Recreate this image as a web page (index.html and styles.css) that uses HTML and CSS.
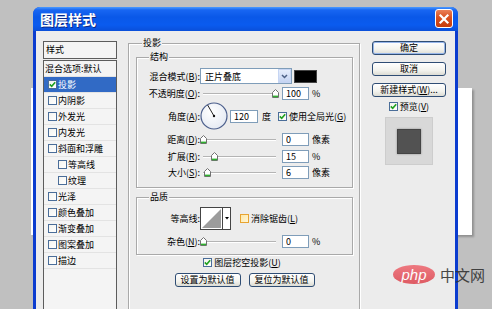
FILE: index.html
```html
<!DOCTYPE html>
<html>
<head>
    <meta charset="utf-8">
    <title>图层样式</title>
    <link rel="stylesheet" href="styles.css">
</head>
<body>
    <div class="canvasBehind"></div>

    <div class="dialog">
        <div class="titleBar">
            <span class="titleText">图层样式</span>
            <span class="closeBtn">
                <svg width="16" height="16" viewBox="0 0 16 16"><path d="M4.5 4.5 L11.5 11.5 M11.5 4.5 L4.5 11.5" stroke="#fff" stroke-width="2.2" stroke-linecap="square"/></svg>
            </span>
        </div>

        <div class="dialogBody">
            <div class="styleList">
                <div class="listHead">样式</div>
                <ul class="listItems">
                    <li class="item plain">混合选项:默认</li>
                    <li class="item selected"><span class="check on"><svg width="7" height="7" viewBox="0 0 7 7"><path d="M0.8 3.4 L2.7 5.3 L6.2 1.2" fill="none" stroke="#21a121" stroke-width="1.6"/></svg></span>投影</li>
                    <li class="item"><span class="check"></span>内阴影</li>
                    <li class="item"><span class="check"></span>外发光</li>
                    <li class="item"><span class="check"></span>内发光</li>
                    <li class="item"><span class="check"></span>斜面和浮雕</li>
                    <li class="item sub"><span class="check"></span>等高线</li>
                    <li class="item sub"><span class="check"></span>纹理</li>
                    <li class="item"><span class="check"></span>光泽</li>
                    <li class="item"><span class="check"></span>颜色叠加</li>
                    <li class="item"><span class="check"></span>渐变叠加</li>
                    <li class="item"><span class="check"></span>图案叠加</li>
                    <li class="item"><span class="check"></span>描边</li>
                </ul>
            </div>

            <div class="group mainGroup">
                <span class="legend">投影</span>

                <div class="group structGroup">
                    <span class="legend">结构</span>

                    <div class="row rowSelect">
                        <span class="label">混合模式(<u>B</u>):</span>
                        <div class="selectBox">
                            <span class="selectText">正片叠底</span>
                            <span class="selectArrow"><svg width="11" height="12" viewBox="0 0 11 12"><path d="M3 5 L5.5 7.5 L8 5" fill="none" stroke="#4d6185" stroke-width="1.5"/></svg></span>
                        </div>
                        <span class="swatch"></span>
                    </div>

                    <div class="row rowOpacity">
                        <span class="label">不透明度(<u>O</u>):</span>
                        <div class="slider"><span class="thumb" style="left: 72px"></span></div>
                        <input class="num" type="text" value="100">
                        <span class="unit">%</span>
                    </div>

                    <div class="row rowAngle">
                        <span class="label">角度(<u>A</u>):</span>
                        <svg class="dial" width="28" height="28" viewBox="0 0 28 28">
                            <defs>
                                <radialGradient id="dialFill" cx="0.4" cy="0.35" r="0.7">
                                    <stop offset="0" stop-color="#ffffff"/>
                                    <stop offset="1" stop-color="#e4e9f2"/>
                                </radialGradient>
                            </defs>
                            <circle cx="14" cy="14" r="13" fill="url(#dialFill)" stroke="#4c5f8c" stroke-width="1.2"/>
                            <line x1="14" y1="14" x2="7.6" y2="3" stroke="#222" stroke-width="1"/>
                            <circle cx="14" cy="14" r="1.2" fill="#111"/>
                        </svg>
                        <input class="num angleNum" type="text" value="120">
                        <span class="unit degUnit">度</span>
                        <span class="check on globalCheck"><svg width="7" height="7" viewBox="0 0 7 7"><path d="M0.8 3.4 L2.7 5.3 L6.2 1.2" fill="none" stroke="#21a121" stroke-width="1.6"/></svg></span>
                        <span class="checkText">使用全局光(<u>G</u>)</span>
                    </div>

                    <div class="row rowDist">
                        <span class="label">距离(<u>D</u>):</span>
                        <div class="slider"><span class="thumb" style="left: 0px"></span></div>
                        <input class="num" type="text" value="0">
                        <span class="unit">像素</span>
                    </div>

                    <div class="row rowSpread">
                        <span class="label">扩展(<u>R</u>):</span>
                        <div class="slider"><span class="thumb" style="left: 11px"></span></div>
                        <input class="num" type="text" value="15">
                        <span class="unit">%</span>
                    </div>

                    <div class="row rowSize">
                        <span class="label">大小(<u>S</u>):</span>
                        <div class="slider"><span class="thumb" style="left: 4px"></span></div>
                        <input class="num" type="text" value="6">
                        <span class="unit">像素</span>
                    </div>
                </div>

                <div class="group qualityGroup">
                    <span class="legend">品质</span>

                    <div class="row rowContour">
                        <span class="label">等高线:</span>
                        <svg class="contour" width="31" height="23" viewBox="0 0 31 23">
                            <rect x="0.5" y="0.5" width="30" height="22" fill="#fff" stroke="#444"/>
                            <polygon points="2,21 21,2 21,21" fill="#9c9c9c"/>
                            <line x1="22.5" y1="1" x2="22.5" y2="22" stroke="#444"/>
                            <polygon points="25,10 29,10 27,12.5" fill="#000"/>
                        </svg>
                        <span class="check hover antiCheck"></span>
                        <span class="checkText">消除锯齿(<u>L</u>)</span>
                    </div>

                    <div class="row rowNoise">
                        <span class="label">杂色(<u>N</u>):</span>
                        <div class="slider"><span class="thumb" style="left: 0px"></span></div>
                        <input class="num" type="text" value="0">
                        <span class="unit">%</span>
                    </div>
                </div>

                <div class="knockRow">
                    <span class="check on"><svg width="7" height="7" viewBox="0 0 7 7"><path d="M0.8 3.4 L2.7 5.3 L6.2 1.2" fill="none" stroke="#21a121" stroke-width="1.6"/></svg></span>
                    <span class="checkText">图层挖空投影(<u>U</u>)</span>
                </div>

                <div class="defaultBtns">
                    <button class="btn wideBtn">设置为默认值</button>
                    <button class="btn wideBtn">复位为默认值</button>
                </div>
            </div>

            <div class="sideCol">
                <button class="btn okBtn">确定</button>
                <button class="btn">取消</button>
                <button class="btn">新建样式(<u>W</u>)...</button>
                <div class="previewRow">
                    <span class="check on"><svg width="7" height="7" viewBox="0 0 7 7"><path d="M0.8 3.4 L2.7 5.3 L6.2 1.2" fill="none" stroke="#21a121" stroke-width="1.6"/></svg></span>
                    <span class="checkText">预览(<u>V</u>)</span>
                </div>
                <div class="previewBox">
                    <span class="previewSquare"></span>
                </div>
            </div>
        </div>
    </div>

    <div class="watermark">
        <span class="phpBadge">php</span>
        <span class="cnText">中文网</span>
    </div>
</body>
</html>
```

FILE: styles.css
```css
body {
    margin: 0;
    width: 492px;
    height: 309px;
    overflow: hidden;
    position: relative;
    background-color: #c0c0c0;
    font-family: "Noto Sans CJK SC", sans-serif;
    font-size: 9px;
    color: #000;
}

u {
    text-decoration: underline;
}

.canvasBehind {
    position: absolute;
    left: 31px;
    top: 88px;
    width: 441px;
    height: 147px;
    background-color: #ffffff;
    box-shadow: 2px 2px 2px rgba(0, 0, 0, 0.25);
}

.dialog {
    position: absolute;
    left: 33px;
    top: 7px;
    width: 425px;
    height: 302px;
    display: flex;
    flex-direction: column;
    background-color: #0b3ccf;
    border-radius: 7px 7px 0 0;
}

.titleBar {
    height: 24px;
    flex: none;
    display: flex;
    align-items: flex-start;
    justify-content: space-between;
    padding: 0 5px 0 7px;
    border-radius: 7px 7px 0 0;
    background: linear-gradient(#4c9bff 0, #1866f2 3px, #0a58e8 10px, #0a5bef 18px, #0a4fd9 24px);
}

.titleText {
    margin-top: 5px;
    color: #fff;
    font-size: 14px;
    font-weight: bold;
    line-height: 14px;
    text-shadow: 1px 1px 0 #0b2a86;
}

.closeBtn {
    margin-top: 2px;
    width: 16px;
    height: 17px;
    display: flex;
    align-items: center;
    justify-content: center;
    border: 1px solid #fff;
    border-radius: 3px;
    background: linear-gradient(#ea8058, #d9501f 45%, #c63c0c);
}

.dialogBody {
    flex: 1;
    min-height: 0;
    overflow: hidden;
    margin: 0 3px;
    display: flex;
    align-items: flex-start;
    padding: 10px 9px 0 7px;
    background-color: #ececec;
}

/* left list of styles */
.styleList {
    width: 74px;
    flex: none;
}

.listHead {
    height: 18px;
    box-sizing: border-box;
    margin-bottom: 1px;
    padding-left: 2px;
    line-height: 16px;
    border: 1px solid #5c5c5c;
    background-color: #f4f4f4;
}

.listItems {
    list-style: none;
    margin: 0;
    padding: 0;
    height: 248px;
    border: 1px solid #5c5c5c;
    border-bottom: none;
    background-color: #f4f4f4;
}

.item {
    height: 16px;
    box-sizing: border-box;
    display: flex;
    align-items: center;
    padding-left: 4px;
    border-bottom: 1px solid #e3e3e3;
    white-space: nowrap;
}

.item.plain {
    padding-left: 1px;
}

.item.sub {
    padding-left: 14px;
}

.item.selected {
    background-color: #316ac5;
    color: #fff;
}

.check {
    width: 9px;
    height: 9px;
    box-sizing: border-box;
    flex: none;
    display: inline-flex;
    align-items: center;
    justify-content: center;
    border: 1px solid #4a6d99;
    background: linear-gradient(135deg, #f4f4f0, #ffffff);
}

.item .check {
    margin-right: 1px;
}

.check.hover {
    border-color: #e8a431;
    background: linear-gradient(135deg, #fde8a8, #fff6d8);
}

.checkText {
    margin-left: 2px;
    white-space: nowrap;
}

/* group boxes */
.group {
    position: relative;
    box-sizing: border-box;
    border: 1px solid #a9a9a9;
    box-shadow: inset 1px 1px 0 #fff, 1px 1px 0 #fff;
}

.legend {
    position: absolute;
    top: -7px;
    left: 12px;
    padding: 0 1px;
    line-height: 12px;
    background-color: #ececec;
}

.mainGroup {
    width: 232px;
    height: 266px;
    flex: none;
    margin: 2px 12px 0 11px;
    padding: 13px 6px 0 7px;
    border-bottom: none;
}

.mainGroup > .legend {
    left: 13px;
}

.structGroup {
    height: 131px;
    padding-top: 10px;
}

.qualityGroup {
    height: 58px;
    margin-top: 9px;
    padding-top: 9px;
}

.row {
    display: flex;
    align-items: center;
    white-space: nowrap;
}

.label {
    width: 63px;
    flex: none;
    text-align: right;
}

.rowSelect {
    height: 16px;
}

.rowOpacity {
    height: 13px;
    margin-top: 3px;
}

.rowAngle {
    height: 28px;
    margin-top: 2px;
}

.rowDist {
    height: 13px;
    margin-top: 3px;
}

.rowSpread {
    height: 13px;
    margin-top: 4px;
}

.rowSize {
    height: 13px;
    margin-top: 3px;
}

.rowContour {
    height: 23px;
}

.rowNoise {
    height: 13px;
    margin-top: 5px;
}

.selectBox {
    width: 92px;
    height: 16px;
    box-sizing: border-box;
    display: flex;
    align-items: center;
    justify-content: space-between;
    border: 1px solid #7f9db9;
    background-color: #fff;
}

.selectText {
    padding-left: 4px;
}

.selectArrow {
    width: 13px;
    height: 14px;
    box-sizing: border-box;
    display: flex;
    align-items: center;
    justify-content: center;
    border: 1px solid #c6d5f3;
    background: linear-gradient(#e6eefc, #c5d4f2);
}

.swatch {
    width: 23px;
    height: 13px;
    box-sizing: border-box;
    margin-left: 2px;
    border: 1px solid #444;
    background-color: #000;
}

.slider {
    position: relative;
    width: 79px;
    height: 13px;
    flex: none;
}

.slider::before {
    content: "";
    position: absolute;
    left: 3px;
    right: 3px;
    top: 6px;
    height: 0;
    border-top: 1px solid #b4b4b4;
    border-bottom: 1px solid #fff;
}

.thumb {
    position: absolute;
    top: 2px;
    width: 7px;
    height: 9px;
    background: url("data:image/svg+xml,%3Csvg xmlns='http://www.w3.org/2000/svg' width='7' height='9' viewBox='0 0 7 9'%3E%3Cpath d='M0.5 3.5 L3.5 0.5 L6.5 3.5 V8.5 H0.5 Z' fill='%23fff' stroke='%23707070'/%3E%3Cpath d='M1 7.4 H6' stroke='%2330b030' stroke-width='1.6'/%3E%3C/svg%3E") no-repeat;
}

.num {
    width: 27px;
    height: 13px;
    box-sizing: border-box;
    margin: 0 0 0 3px;
    padding: 0 0 0 3px;
    border: 1px solid #7f9db9;
    background-color: #fff;
    font-family: "Noto Sans CJK SC", sans-serif;
    font-size: 9px;
    line-height: 11px;
    color: #000;
    outline: none;
}

.unit {
    margin-left: 3px;
}

.dial {
    flex: none;
}

.angleNum {
    width: 28px;
    margin-left: 2px;
}

.degUnit {
    margin-left: 4px;
}

.globalCheck {
    margin-left: 7px;
}

.contour {
    flex: none;
}

.antiCheck {
    margin-left: 9px;
}

.knockRow {
    height: 11px;
    margin-top: 2px;
    display: flex;
    align-items: center;
    justify-content: center;
    padding-right: 5px;
}

.defaultBtns {
    display: flex;
    justify-content: center;
    gap: 8px;
    margin-top: 5px;
}

/* buttons */
.btn {
    height: 14px;
    box-sizing: border-box;
    padding: 0;
    border: 1px solid #2f4d74;
    border-radius: 3px;
    background: linear-gradient(#ffffff, #f3f3ee 60%, #dcdcd4);
    font-family: "Noto Sans CJK SC", sans-serif;
    font-size: 9px;
    line-height: 12px;
    color: #000;
    white-space: nowrap;
}

.wideBtn {
    width: 66px;
}

.okBtn {
    box-shadow: inset 0 0 0 1px #97b6ea;
}

.sideCol {
    width: 74px;
    flex: none;
    display: flex;
    flex-direction: column;
    gap: 7px;
}

.sideCol .btn {
    width: 74px;
}

.previewRow {
    height: 11px;
    margin-top: -3px;
    display: flex;
    align-items: center;
    justify-content: center;
}

.previewBox {
    width: 48px;
    height: 48px;
    box-sizing: border-box;
    margin-top: -2px;
    align-self: center;
    display: flex;
    align-items: center;
    justify-content: center;
    border: 1px solid #cdcdcd;
    background-color: #d8d8d8;
}

.previewSquare {
    width: 24px;
    height: 25px;
    box-sizing: border-box;
    border: 1px solid #444;
    background-color: #525252;
    box-shadow: 0 0 2px rgba(0, 0, 0, 0.35);
}

/* site watermark */
.watermark {
    position: absolute;
    left: 393px;
    top: 265px;
    display: flex;
    align-items: center;
    gap: 5px;
}

.phpBadge {
    width: 42px;
    height: 19px;
    display: flex;
    align-items: center;
    justify-content: center;
    border-radius: 50%;
    background: linear-gradient(#ee7078, #dd4f58);
    color: #fff;
    font-family: "Liberation Sans", sans-serif;
    font-size: 15px;
    font-style: italic;
    line-height: 19px;
    opacity: 0.92;
}

.cnText {
    color: #333;
    font-family: "Noto Sans CJK SC", sans-serif;
    font-size: 15px;
    line-height: 19px;
    opacity: 0.9;
}
```
